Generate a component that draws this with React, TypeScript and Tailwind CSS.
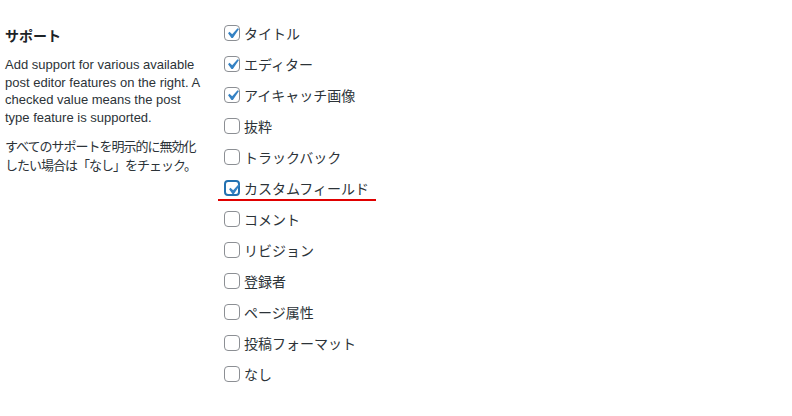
import { useState } from 'react';

const latin = { fontFamily: '"Liberation Sans", "Noto Sans CJK JP", sans-serif' };
const jp = { fontFamily: '"Noto Sans CJK JP", sans-serif' };

const supports = [
  { label: 'タイトル', checked: true },
  { label: 'エディター', checked: true },
  { label: 'アイキャッチ画像', checked: true },
  { label: '抜粋', checked: false },
  { label: 'トラックバック', checked: false },
  { label: 'カスタムフィールド', checked: true, focused: true },
  { label: 'コメント', checked: false },
  { label: 'リビジョン', checked: false },
  { label: '登録者', checked: false },
  { label: 'ページ属性', checked: false },
  { label: '投稿フォーマット', checked: false },
  { label: 'なし', checked: false },
];

function Checkbox({ checked, focused }: { checked: boolean; focused?: boolean }) {
  return (
    <span
      className={
        focused
          ? 'relative flex h-4 w-4 shrink-0 items-center justify-center rounded-[4px] border-2 border-[#2271b1] bg-white'
          : 'relative flex h-4 w-4 shrink-0 items-center justify-center rounded-[4px] border border-[#8c8f94] bg-white'
      }
    >
      {checked && (
        <svg viewBox="0 0 20 20" className="absolute left-[-3px] top-[-3px] h-[21px] w-[21px]">
          <path d="M14.83 4.89l1.34.94-5.81 8.38H9.02L5.78 9.67l1.34-1.25 2.57 2.4z" fill="#3582c4" />
        </svg>
      )}
    </span>
  );
}

export default function App() {
  const [items] = useState(supports);

  return (
    <div className="flex h-[416px] w-[792px] bg-white text-[#1d2327]">
      <div className="w-[224px] shrink-0 pl-[5px] pr-[19px] pt-[24px]">
        <h2 className="text-[14px] font-bold leading-[22px]" style={jp}>
          サポート
        </h2>
        <p className="mt-[10px] text-[13px] leading-[17.5px] text-[#2c3338]" style={latin}>
          Add support for various available post editor features on the right. A checked value means
          the post type feature is supported.
        </p>
        <p className="mt-[11px] text-[13px] leading-[18.5px] tracking-[-1px] text-[#2c3338]" style={jp}>
          すべてのサポートを明示的に無効化したい場合は「なし」をチェック。
        </p>
      </div>
      <div className="flex flex-col pt-[17px] text-[#2c3338]" style={jp}>
        {items.map((item) => (
          <div key={item.label} className="relative flex h-[31px] items-center gap-[4px]">
            <Checkbox checked={item.checked} focused={item.focused} />
            <span className="text-[14px] leading-[20px]">{item.label}</span>
            {item.focused && (
              <span className="absolute left-[-6px] top-[27px] h-[2px] w-[158px] bg-[#e00000]" />
            )}
          </div>
        ))}
      </div>
    </div>
  );
}
